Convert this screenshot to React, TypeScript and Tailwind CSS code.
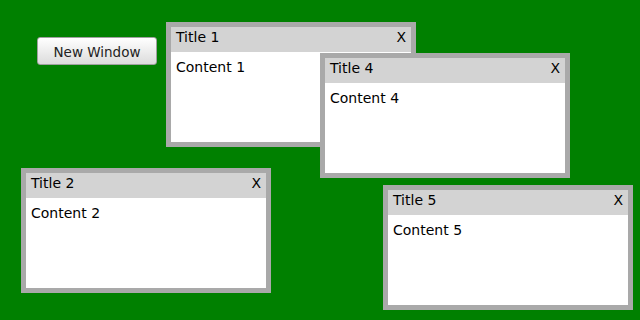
const windows = [
  { id: 1, left: 166, top: 22 },
  { id: 2, left: 21, top: 168 },
  { id: 4, left: 320, top: 53 },
  { id: 5, left: 383, top: 185 },
];

const Win = ({ id, left, top }: { id: number; left: number; top: number }) => {
  return (
    <div
      className="absolute w-[250px] h-[125px] border-[5px] border-[#a9a9a9] bg-white flex flex-col"
      style={{ left, top }}
    >
      <div className="h-[25px] bg-[#d3d3d3] flex items-start justify-between px-[5px] pt-[2px] text-[14px] leading-[17px] text-black">
        <span>Title {id}</span>
        <span>X</span>
      </div>
      <div className="flex-1 px-[5px] pt-[5px] text-[14px] text-black">Content {id}</div>
    </div>
  );
};

export default function App() {
  return (
    <div
      className="relative w-[640px] h-[320px] bg-[#008000] overflow-hidden"
      style={{ fontFamily: '"DejaVu Sans", Verdana, sans-serif' }}
    >
      <button className="absolute left-[37px] top-[37px] w-[120px] h-[28px] pt-[2px] rounded-[3px] border border-[#a0a0a0] bg-gradient-to-b from-white to-[#dcdcdc] text-[13.5px] text-[#222]">
        New Window
      </button>
      {windows.map((w) => (
        <Win key={w.id} {...w} />
      ))}
    </div>
  );
}
